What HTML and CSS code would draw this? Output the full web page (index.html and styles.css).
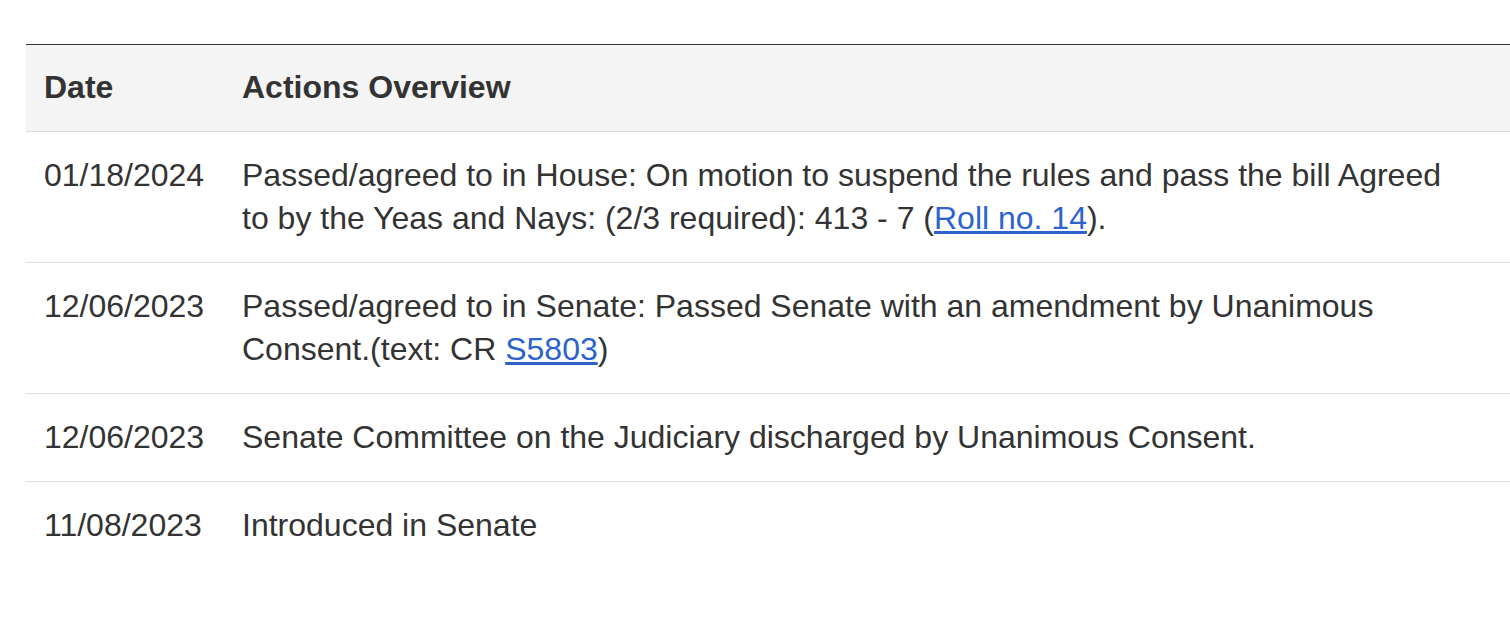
FILE: index.html
```html
<!DOCTYPE html>
<html lang="en">
<head>
<meta charset="utf-8">
<title>Actions Overview</title>
<link rel="stylesheet" href="styles.css">
</head>
<body>
<div class="page">
  <table class="actions">
    <thead>
      <tr>
        <th class="col-date">Date</th>
        <th class="col-action">Actions Overview</th>
      </tr>
    </thead>
    <tbody>
      <tr>
        <td class="col-date">01/18/2024</td>
        <td class="col-action">Passed/agreed to in House: On motion to suspend the rules and pass the bill Agreed to by the Yeas and Nays: (2/3 required): 413 - 7 (<a href="#">Roll no. 14</a>).</td>
      </tr>
      <tr>
        <td class="col-date">12/06/2023</td>
        <td class="col-action">Passed/agreed to in Senate: Passed Senate with an amendment by Unanimous Consent.(text: CR <a href="#">S5803</a>)</td>
      </tr>
      <tr>
        <td class="col-date">12/06/2023</td>
        <td class="col-action">Senate Committee on the Judiciary discharged by Unanimous Consent.</td>
      </tr>
      <tr>
        <td class="col-date">11/08/2023</td>
        <td class="col-action">Introduced in Senate</td>
      </tr>
    </tbody>
  </table>
</div>
</body>
</html>
```

FILE: styles.css
```css
html, body {
  margin: 0;
  padding: 0;
  background: #ffffff;
  overflow: hidden;
}

.page {
  padding: 44px 0 0 26px;
  font-family: "Liberation Sans", Arial, Helvetica, sans-serif;
  color: #333333;
}

.actions {
  width: 1484px;
  border-collapse: collapse;
  table-layout: fixed;
  font-size: 32px;
  line-height: 43px;
  border-top: 1px solid #333333;
}

.actions thead tr {
  background: #f4f4f4;
  border-bottom: 1px solid #dcdcdc;
}

.actions th {
  text-align: left;
  font-weight: bold;
  padding: 21px 18px 22px 18px;
  vertical-align: top;
}

.actions td {
  padding: 22px 18px 22px 18px;
  vertical-align: top;
  text-align: left;
}

.actions .col-action {
  padding-right: 40px;
}

.actions tbody tr {
  border-bottom: 1px solid #e0e0e0;
}

.actions tbody tr:last-child {
  border-bottom: none;
}

.col-date {
  width: 162px;
}

.actions a {
  color: #2d63cc;
  text-decoration: underline;
}
```
